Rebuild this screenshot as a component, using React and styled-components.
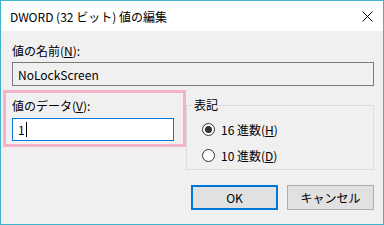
import styled, { createGlobalStyle } from 'styled-components';

const Global = createGlobalStyle`
  html, body {
    margin: 0;
    padding: 0;
    background: #f0f0f0;
  }
  body {
    font-family: "Noto Sans CJK JP", "Noto Sans", sans-serif;
    font-size: 12px;
    color: #000;
  }
`;

const Window = styled.div`
  box-sizing: border-box;
  width: 384px;
  height: 225px;
  border: 1px solid #3fb3c9;
  background: #f0f0f0;
  overflow: hidden;
`;

const TitleBar = styled.div`
  height: 30px;
  background: #fff;
  display: flex;
  align-items: center;
  justify-content: space-between;
  padding: 0 10px 0 9px;
  font-size: 12px;
`;

const Body = styled.div`
  padding: 0 9px 0 11px;
  display: flex;
  flex-direction: column;
`;

const Label = styled.div`
  line-height: 16px;
  height: 16px;
  white-space: nowrap;
`;

const NameLabel = styled(Label)`
  margin-top: 12px;
`;

const TextBox = styled.div`
  box-sizing: border-box;
  height: ${(p) => (p.$active ? 23 : 24)}px;
  border: 1px solid ${(p) => (p.$active ? '#0078d7' : '#7a7a7a')};
  background: ${(p) => (p.$active ? '#fff' : '#f0f0f0')};
  display: flex;
  align-items: center;
  padding-left: 5px;
  margin-top: ${(p) => (p.$active ? 4 : 3)}px;
`;

const Caret = styled.span`
  display: inline-block;
  width: 1px;
  height: 15px;
  background: #000;
  margin-left: 1px;
`;

const Row = styled.div`
  display: flex;
  align-items: flex-start;
  margin-top: 4px;
`;

const Highlight = styled.div`
  box-sizing: border-box;
  width: 183px;
  height: 57px;
  margin-left: -9px;
  border: 3px solid #f5b3cb;
  padding: 5px 9px 0 6px;
`;

const Group = styled.fieldset`
  box-sizing: border-box;
  width: 188px;
  height: 73px;
  margin: 7px 0 0 0;
  border: 1px solid #dcdcdc;
  padding: 6px 0 0 6px;
  min-width: 0;
  display: flex;
  flex-direction: column;
  gap: 6px;
`;

const Legend = styled.legend`
  padding: 0 1px;
  line-height: 16px;
`;

const Radio = styled.div`
  display: flex;
  align-items: center;
  height: 20px;
  gap: 6px;
  margin-left: 9px;
`;

const Circle = styled.span`
  box-sizing: border-box;
  width: 13px;
  height: 13px;
  border-radius: 50%;
  border: 1px solid #333;
  background: #fff;
  display: flex;
  align-items: center;
  justify-content: center;

  &::after {
    content: '';
    width: 7px;
    height: 7px;
    border-radius: 50%;
    background: ${(p) => (p.$checked ? '#333' : 'transparent')};
  }
`;

const Buttons = styled.div`
  display: flex;
  justify-content: flex-end;
  gap: 9px;
  margin-top: 15px;
`;

const Button = styled.div`
  box-sizing: border-box;
  width: 87px;
  height: 25px;
  display: flex;
  align-items: center;
  justify-content: center;
  background: #e1e1e1;
  border: ${(p) => (p.$default ? '2px solid #0078d7' : '1px solid #adadad')};
`;

const U = styled.span`
  text-decoration: underline;
`;

function CloseIcon() {
  return (
    <svg width="11" height="11" viewBox="0 0 11 11">
      <path d="M0.5 0.5 L10.5 10.5 M10.5 0.5 L0.5 10.5" stroke="#000" strokeWidth="1" />
    </svg>
  );
}

export default function App() {
  return (
    <>
      <Global />
      <Window>
        <TitleBar>
          <span>DWORD (32 ビット) 値の編集</span>
          <CloseIcon />
        </TitleBar>
        <Body>
          <NameLabel>
            値の名前(<U>N</U>):
          </NameLabel>
          <TextBox>NoLockScreen</TextBox>
          <Row>
            <Highlight>
              <Label>
                値のデータ(<U>V</U>):
              </Label>
              <TextBox $active>
                1<Caret />
              </TextBox>
            </Highlight>
            <Group>
              <Legend>表記</Legend>
              <Radio>
                <Circle $checked />
                <span>
                  16 進数(<U>H</U>)
                </span>
              </Radio>
              <Radio>
                <Circle />
                <span>
                  10 進数(<U>D</U>)
                </span>
              </Radio>
            </Group>
          </Row>
          <Buttons>
            <Button $default>OK</Button>
            <Button>キャンセル</Button>
          </Buttons>
        </Body>
      </Window>
    </>
  );
}
